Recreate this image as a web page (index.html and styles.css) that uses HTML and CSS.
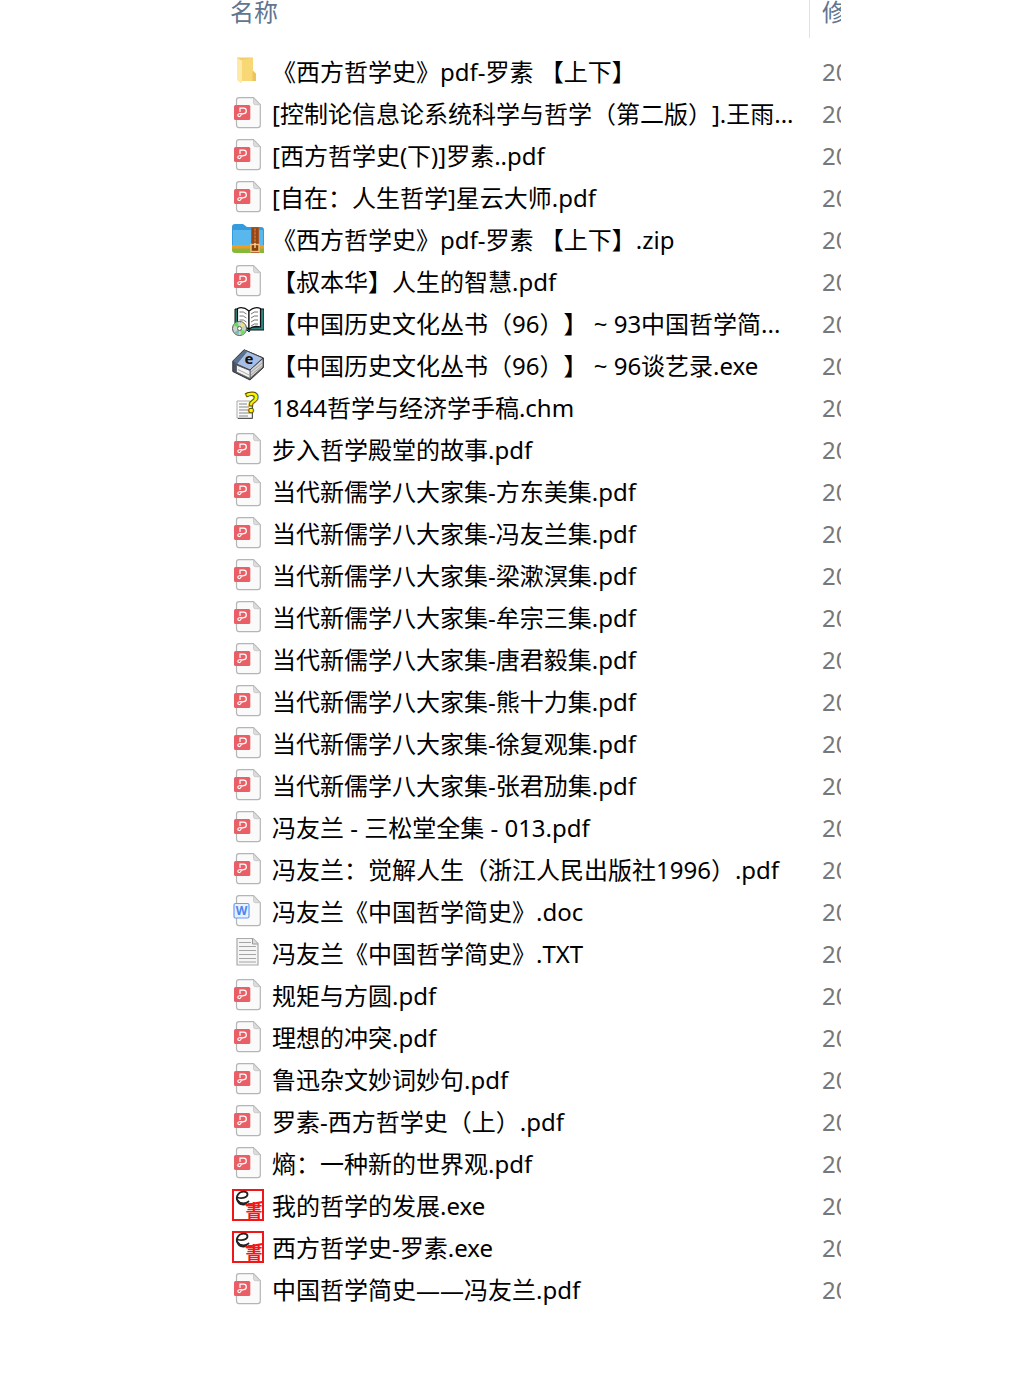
FILE: index.html
```html
<!DOCTYPE html>
<html lang="zh-CN">
<head>
    <meta charset="UTF-8">
    <meta name="viewport" content="width=device-width, initial-scale=1.0">
    <title>文件列表</title>
    <link rel="stylesheet" href="styles.css">
</head>
<body>
    <!-- 图标 -->
    <svg class="icon-defs" aria-hidden="true">
        <symbol id="icon-folder" viewBox="0 0 32 32">
            <path d="M5 2.5h16v13l3 3V26H9l-4-2z" fill="#f3cd6a"/>
            <path d="M5 3l5 2.500v21.500q-1 1.500-2 .5L5 25z" fill="#ffe9a6"/>
            <path d="M10 5l11-2v13l3 3v7H10z" fill="#f8d775"/>
            <path d="M20.500 16l3.500 3v7h-3.500z" fill="#ecc45c"/>
        </symbol>
        <symbol id="icon-page" viewBox="0 0 32 32">
            <path d="M7 .7h14.500l6.800 7v20.300a2.600 2.600 0 0 1-2.600 2.600H7A2.600 2.600 0 0 1 4.500 28V3.300A2.600 2.600 0 0 1 7 .7z" fill="#fafafa" stroke="#b5b5b5" stroke-width="1.200"/>
            <path d="M21.500 1v4.700q0 2 2 2h4.500z" fill="#dcdcdc" stroke="#c4c4c4" stroke-width=".8"/>
        </symbol>
        <symbol id="icon-pdf" viewBox="0 0 32 32">
            <use href="#icon-page"/>
            <rect x="2" y="8" width="16.300" height="15" rx="1.500" fill="#ea5f66"/>
            <path d="M8 14.500v-3.300h3.600a2.700 2.700 0 0 1 0 5.400c-2 0-2.600.8-3 2-.5 1.400-2.800 1.200-2.800-.4 0-1.600 2.200-1.800 4.800-1.400" fill="none" stroke="#fff" stroke-width="1.200" stroke-linecap="round"/>
        </symbol>
        <symbol id="icon-doc" viewBox="0 0 32 32">
            <use href="#icon-page"/>
            <rect x="2" y="8.500" width="15" height="14.500" rx="1.500" fill="#e8f1ff" stroke="#6d9cf0" stroke-width="1.200"/>
            <text x="9.500" y="20" class="glyph-doc">W</text>
        </symbol>
        <symbol id="icon-txt" viewBox="0 0 32 32">
            <path d="M5 1.500h16l5 5V28H5z" fill="#f5f5f5" stroke="#a9a9a9" stroke-width="1.200"/>
            <path d="M20.500 1.500V7H26" fill="#ddd" stroke="#999"/>
            <path d="M7 5.500h12M7 9.500h17M7 13.500h17M7 17.500h17M7 21.500h17M7 25h17" stroke="#a5a5a5" stroke-width="1.200"/>
        </symbol>
        <symbol id="icon-zip" viewBox="0 0 32 32">
            <path d="M0 4q0-3 3-3h8l4 3h14q3 0 3 3v22H3q-3 0-3-3z" fill="#349bdc"/>
            <path d="M1 7h30v15H1z" fill="#58b7ec"/>
            <path d="M0 22h32v4H0z" fill="#f39a20"/>
            <path d="M0 25.500h32V30H3q-3 0-3-3z" fill="#86b83c"/>
            <path d="M19 4h8v26h-8z" fill="#a95622"/>
            <path d="M21 5v17M25 5v17" stroke="#7b3813" stroke-width="1"/>
            <path d="M23 6v15" stroke="#d38a4c" stroke-dasharray="1.500 2"/>
            <rect x="19" y="21.500" width="8" height="7" fill="#87400f" stroke="#f4c27a" stroke-width="1.400"/>
            <path d="M23 20v5" stroke="#f8d59c" stroke-width="1.400"/>
        </symbol>
        <symbol id="icon-book" viewBox="0 0 32 32">
            <path d="M3 2h4v18h20V2h5v21H18l-1 2-2-2H3z" fill="#2b8580" stroke="#111"/>
            <path d="M17 4Q11-1 5.500 1.500V20Q12 18 17 22z" fill="#fff" stroke="#111" stroke-width="1.200"/>
            <path d="M17 4q6-5 11.500-2.500V20Q22 18 17 22z" fill="#fff" stroke="#111" stroke-width="1.200"/>
            <path d="M7.500 5q4-1 7 2M7.500 9q4-1 7 2M7.500 13q4-1 7 2M19 7q3-3 7-2M19 11q3-3 7-2M19 15q3-3 7-2M19 19q3-3 7-2" fill="none" stroke="#777"/>
            <circle cx="7.500" cy="21.500" r="7" fill="#c9d3ce" stroke="#555"/>
            <path d="M7.500 21.500L1.500 18a7 7 0 0 1 4-3z" fill="#62df55"/>
            <path d="M7.500 21.500l6 3a7 7 0 0 1-4 3.500z" fill="#6de35c"/>
            <path d="M7.500 21.500l2-6.500 3.500 3z" fill="#f0e46c"/>
            <path d="M7.500 21.500l-5 4 4 2.500z" fill="#75bdb7"/>
            <circle cx="7.500" cy="21.500" r="2" fill="#fff" stroke="#666"/>
        </symbol>
        <symbol id="icon-ebook" viewBox="0 0 32 32">
            <path d="M12 .8L31.500 9v9.500L18 31 .8 22.500V12z" fill="#44546b" stroke="#333" stroke-linejoin="round"/>
            <path d="M18 20.500L31 9.500v8.500L18 29.500z" fill="#d4d4d4" stroke="#555"/>
            <path d="M4.500 16L18 21.500v8L4.500 23z" fill="#f4f4f4" stroke="#666"/>
            <path d="M19 23l11-9M19 26l11-9M6 20.500l11 5.500" stroke="#999" stroke-width=".8"/>
            <path d="M12.500 1L31 9 18 21 4.500 15z" fill="#a7bfe4" stroke="#444"/>
            <path d="M12.500 1L1 12l4 3L15.500 2.500z" fill="#59708f"/>
            <text x="17" y="15" class="glyph-ebook">e</text>
        </symbol>
        <symbol id="icon-chm" viewBox="0 0 32 32">
            <path d="M5 10h13l2 2v15H5z" fill="#fafafa" stroke="#aaa"/>
            <path d="M20.500 14v13.500H6" fill="none" stroke="#555"/>
            <path d="M7 13h8M7 16h10M7 19h9M7 22h11M7 25h9" stroke="#888"/>
            <text x="20" y="22" class="glyph-chm">?</text>
        </symbol>
        <symbol id="icon-stamp" viewBox="0 0 32 32">
            <path d="M1 1h30v30H1z" fill="#fff" stroke="#f21616" stroke-width="2"/>
            <path d="M5.500 8.500c5 1.500 10 0 10-3.200S9 1.500 6 5.500C3 10 6 14.500 11 14.500c3 0 4-1 5.500-2" fill="none" stroke="#222" stroke-width="1.800" stroke-linecap="round"/>
            <path d="M4.500 9Q5 17 12 16.500q3-.5 4.500-4-4 2.500-8 .5z" fill="#222"/>
            <path d="M13.500 16l17-3" stroke="#f21616" stroke-width="2"/>
            <text x="22" y="28" class="glyph-stamp">書</text>
        </symbol>
    </svg>

    <!-- 文件列表 -->
    <main class="explorer">
        <table class="file-table">
            <thead>
                <tr>
                    <th class="col-name" scope="col"><span>名称</span></th>
                    <th class="col-date" scope="col"><span>修</span></th>
                </tr>
            </thead>
            <tbody>
                <tr><td><div class="file"><svg class="icon"><use href="#icon-folder"/></svg><span>《西方哲学史》pdf-罗素 【上下】</span></div></td><td class="date">20</td></tr>
                <tr><td><div class="file"><svg class="icon"><use href="#icon-pdf"/></svg><span>[控制论信息论系统科学与哲学（第二版）].王雨...</span></div></td><td class="date">20</td></tr>
                <tr><td><div class="file"><svg class="icon"><use href="#icon-pdf"/></svg><span>[西方哲学史(下)]罗素..pdf</span></div></td><td class="date">20</td></tr>
                <tr><td><div class="file"><svg class="icon"><use href="#icon-pdf"/></svg><span>[自在：人生哲学]星云大师.pdf</span></div></td><td class="date">20</td></tr>
                <tr><td><div class="file"><svg class="icon"><use href="#icon-zip"/></svg><span>《西方哲学史》pdf-罗素 【上下】.zip</span></div></td><td class="date">20</td></tr>
                <tr><td><div class="file"><svg class="icon"><use href="#icon-pdf"/></svg><span>【叔本华】人生的智慧.pdf</span></div></td><td class="date">20</td></tr>
                <tr><td><div class="file"><svg class="icon"><use href="#icon-book"/></svg><span>【中国历史文化丛书（96）】 ~ 93中国哲学简...</span></div></td><td class="date">20</td></tr>
                <tr><td><div class="file"><svg class="icon"><use href="#icon-ebook"/></svg><span>【中国历史文化丛书（96）】 ~ 96谈艺录.exe</span></div></td><td class="date">20</td></tr>
                <tr><td><div class="file"><svg class="icon"><use href="#icon-chm"/></svg><span>1844哲学与经济学手稿.chm</span></div></td><td class="date">20</td></tr>
                <tr><td><div class="file"><svg class="icon"><use href="#icon-pdf"/></svg><span>步入哲学殿堂的故事.pdf</span></div></td><td class="date">20</td></tr>
                <tr><td><div class="file"><svg class="icon"><use href="#icon-pdf"/></svg><span>当代新儒学八大家集-方东美集.pdf</span></div></td><td class="date">20</td></tr>
                <tr><td><div class="file"><svg class="icon"><use href="#icon-pdf"/></svg><span>当代新儒学八大家集-冯友兰集.pdf</span></div></td><td class="date">20</td></tr>
                <tr><td><div class="file"><svg class="icon"><use href="#icon-pdf"/></svg><span>当代新儒学八大家集-梁漱溟集.pdf</span></div></td><td class="date">20</td></tr>
                <tr><td><div class="file"><svg class="icon"><use href="#icon-pdf"/></svg><span>当代新儒学八大家集-牟宗三集.pdf</span></div></td><td class="date">20</td></tr>
                <tr><td><div class="file"><svg class="icon"><use href="#icon-pdf"/></svg><span>当代新儒学八大家集-唐君毅集.pdf</span></div></td><td class="date">20</td></tr>
                <tr><td><div class="file"><svg class="icon"><use href="#icon-pdf"/></svg><span>当代新儒学八大家集-熊十力集.pdf</span></div></td><td class="date">20</td></tr>
                <tr><td><div class="file"><svg class="icon"><use href="#icon-pdf"/></svg><span>当代新儒学八大家集-徐复观集.pdf</span></div></td><td class="date">20</td></tr>
                <tr><td><div class="file"><svg class="icon"><use href="#icon-pdf"/></svg><span>当代新儒学八大家集-张君劢集.pdf</span></div></td><td class="date">20</td></tr>
                <tr><td><div class="file"><svg class="icon"><use href="#icon-pdf"/></svg><span>冯友兰 - 三松堂全集 - 013.pdf</span></div></td><td class="date">20</td></tr>
                <tr><td><div class="file"><svg class="icon"><use href="#icon-pdf"/></svg><span>冯友兰：觉解人生（浙江人民出版社1996）.pdf</span></div></td><td class="date">20</td></tr>
                <tr><td><div class="file"><svg class="icon"><use href="#icon-doc"/></svg><span>冯友兰《中国哲学简史》.doc</span></div></td><td class="date">20</td></tr>
                <tr><td><div class="file"><svg class="icon"><use href="#icon-txt"/></svg><span>冯友兰《中国哲学简史》.TXT</span></div></td><td class="date">20</td></tr>
                <tr><td><div class="file"><svg class="icon"><use href="#icon-pdf"/></svg><span>规矩与方圆.pdf</span></div></td><td class="date">20</td></tr>
                <tr><td><div class="file"><svg class="icon"><use href="#icon-pdf"/></svg><span>理想的冲突.pdf</span></div></td><td class="date">20</td></tr>
                <tr><td><div class="file"><svg class="icon"><use href="#icon-pdf"/></svg><span>鲁迅杂文妙词妙句.pdf</span></div></td><td class="date">20</td></tr>
                <tr><td><div class="file"><svg class="icon"><use href="#icon-pdf"/></svg><span>罗素-西方哲学史（上）.pdf</span></div></td><td class="date">20</td></tr>
                <tr><td><div class="file"><svg class="icon"><use href="#icon-pdf"/></svg><span>熵：一种新的世界观.pdf</span></div></td><td class="date">20</td></tr>
                <tr><td><div class="file"><svg class="icon"><use href="#icon-stamp"/></svg><span>我的哲学的发展.exe</span></div></td><td class="date">20</td></tr>
                <tr><td><div class="file"><svg class="icon"><use href="#icon-stamp"/></svg><span>西方哲学史-罗素.exe</span></div></td><td class="date">20</td></tr>
                <tr><td><div class="file"><svg class="icon"><use href="#icon-pdf"/></svg><span>中国哲学简史——冯友兰.pdf</span></div></td><td class="date">20</td></tr>
            </tbody>
        </table>
    </main>
</body>
</html>
```
FILE: styles.css
```css
/* 通用 */
body {
    margin: 0;
    background-color: #fff;
    color: #000;
    font-family: "Noto Sans", "Noto Sans CJK SC", sans-serif;
    font-size: 24px;
    text-spacing-trim: space-all; /* 全角括号保持全宽 */
}

.icon-defs {
    display: none;
}

/* 列表容器 */
.explorer {
    box-sizing: border-box;
    max-width: 648px;
    margin: 0 auto;
    padding-left: 37px;
    overflow: hidden;
}

.file-table {
    width: 100%;
    table-layout: fixed;
    border-collapse: collapse;
}

/* 表头 */
.file-table th {
    padding: 0 0 13px;
    color: #5f7590;
    font-weight: normal;
    line-height: 24px;
    text-align: left;
}
.file-table th span {
    display: block;
    height: 38px;
}
.col-date {
    width: 32px;
    overflow: hidden;
}
.file-table .col-date span {
    box-sizing: border-box;
    padding-left: 12px;
    border-left: 1px solid #e2e2e2;
    white-space: nowrap;
}

/* 文件行 */
.file-table td {
    height: 42px;
    padding: 0;
    line-height: 42px;
    white-space: nowrap;
    overflow: hidden;
}
.file {
    display: flex;
    gap: 8px;
    height: 42px;
    padding-left: 2px;
}
.icon {
    flex: none;
    width: 32px;
    height: 32px;
    margin-top: 4px;
}
.file-table .date {
    padding-left: 13px;
    color: #777;
}

/* 图标里的文字 */
.glyph-doc,
.glyph-ebook,
.glyph-chm,
.glyph-stamp {
    text-anchor: middle;
    font-weight: bold;
}
.glyph-doc {
    font-size: 12px;
    fill: #4c86ee;
}
.glyph-ebook {
    font-size: 15px;
    fill: #111;
}
.glyph-chm {
    font-size: 28px;
    fill: #fff200;
    stroke: #554f00;
    stroke-width: 1px;
}
.glyph-stamp {
    font-size: 17px;
    fill: #f21616;
}
```
